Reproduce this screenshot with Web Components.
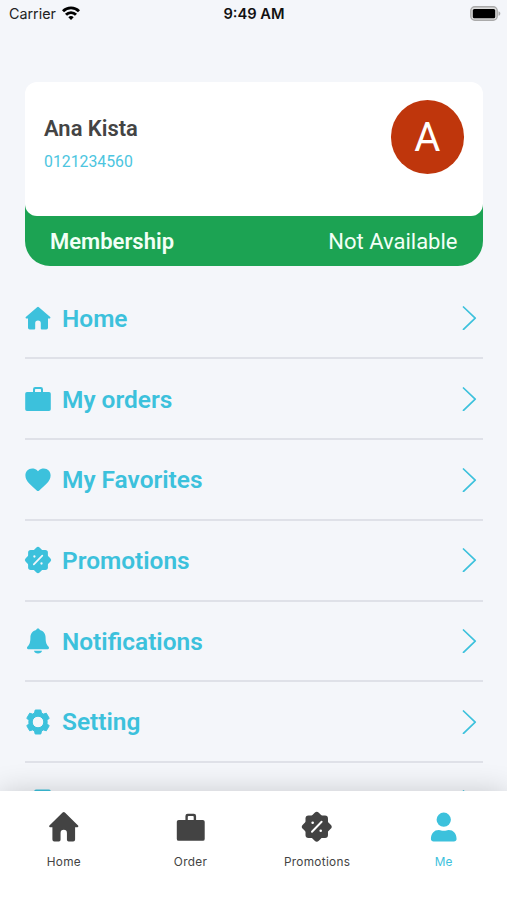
<!DOCTYPE html>
<html lang="en">
<head>
<meta charset="utf-8">
<title>Account</title>
<style>
    html, body {
        margin: 0;
        height: 100%;
        overflow: hidden;
        background: #f4f6fa;
    }
</style>
</head>
<body>
<account-screen></account-screen>

<script>
// Every glyph of the app, drawn in a 26 x 26 box
const ICONS = {
    home: `<path d="M12.1 2.2a1.4 1.4 0 0 1 1.8 0L25.2 12a.8.8 0 0 1-.5 1.4H23v9.4a1.7 1.7 0 0 1-1.7 1.7h-4.5a1 1 0 0 1-1-1v-5.2a2.8 2.8 0 0 0-5.6 0v5.2a1 1 0 0 1-1 1H4.700a1.700 1.700 0 0 1-1.700-1.700v-9.400H1.300a.8.8 0 0 1-.5-1.400z"/>`,
    homeTall: `<path d="M12 .4a1.500 1.500 0 0 1 2 0L25.600 12a.8.8 0 0 1-.5 1.400H23v10.800a1.700 1.700 0 0 1-1.700 1.700h-4a1.500 1.500 0 0 1-1.500-1.500v-6a2.800 2.800 0 0 0-5.600 0v6a1.500 1.500 0 0 1-1.500 1.500h-4A1.700 1.700 0 0 1 3 24.200V13.400H.9A.8.8 0 0 1 .4 12z"/>`,
    bag: `<path fill-rule="evenodd" d="M8 5.900V3.200A2.200 2.200 0 0 1 10.200 1h5.600A2.200 2.200 0 0 1 18 3.200v2.700h6a1.800 1.800 0 0 1 1.800 1.800v15.500A1.800 1.800 0 0 1 24 25H2a1.800 1.800 0 0 1-1.800-1.800V7.700A1.800 1.800 0 0 1 2 5.900zm2 0h6V3.700a.7.7 0 0 0-.7-.7h-4.600a.7.7 0 0 0-.7.7z"/>`,
    bagTall: `<path fill-rule="evenodd" d="M8.300 7V3.500a2 2 0 0 1 2-2h5.400a2 2 0 0 1 2 2V7h5.900a1.700 1.700 0 0 1 1.700 1.700v15a1.700 1.700 0 0 1-1.700 1.700H2.400a1.700 1.700 0 0 1-1.700-1.700v-15A1.700 1.700 0 0 1 2.400 7zm2.100 0h5.200V4.200a.7.7 0 0 0-.7-.7h-3.800a.7.7 0 0 0-.7.7z"/>`,
    heart: `<path d="M13 4.300C11 1.900 8.900 1.500 7.200 1.500 3.200 1.500.4 4.600.4 8.500c0 6.200 6.600 10.400 11.300 15a1.900 1.900 0 0 0 2.600 0c4.700-4.600 11.300-8.800 11.300-15 0-3.900-2.800-7-6.800-7-1.700 0-3.800.4-5.800 2.800z"/>`,
    promo: `<rect x="3.100" y="3.100" width="19.800" height="19.800" rx="2.600"/>
        <rect x="3" y="3" width="20" height="20" rx="2.600" transform="rotate(45 13 13)"/>
        <path d="M8.800 17.400 17.300 8.600" stroke="var(--cut, #f4f6fa)" stroke-width="1.700" stroke-linecap="round"/>
        <circle cx="9.400" cy="9.500" r="1.150" fill="var(--cut, #f4f6fa)"/><circle cx="16.500" cy="16.500" r="1.150" fill="var(--cut, #f4f6fa)"/>`,
    bell: `<path d="M13 .4c1 0 1.700.7 1.900 1.700 3.600.8 5.700 3.900 5.700 7.700 0 5.100 1.100 7 3 9 .8.900.5 2.500-1 2.500H3.400c-1.500 0-1.800-1.600-1-2.500 1.900-2 3-3.900 3-9 0-3.800 2.100-6.900 5.700-7.700C11.300 1.100 12 .4 13 .4zM9 22.700h8c-.3 1.800-1.900 2.800-4 2.800s-3.700-1-4-2.800z"/>`,
    gear: `<path fill-rule="evenodd" d="M10.200 1h5.600l.7 3 1.900 1.100 2.900-.9 2.900 5-2.100 2.100v3.400l2.100 2.100-2.900 5-2.900-.9-1.900 1.100-.7 3h-5.600l-.7-3-1.900-1.100-2.900.9-2.900-5 2.100-2.100v-3.400l-2.100-2.100 2.900-5 2.900.9L9.500 4zM13 7.200a5.800 5.800 0 1 0 0 11.600 5.800 5.800 0 0 0 0-11.600z" stroke="currentColor" stroke-width="1" stroke-linejoin="round"/>`,
    user: `<circle cx="13" cy="6.800" r="6.300"/><path d="M1.700 23.800c0-5 2.800-8 7-8 1.700 0 2.200.8 4.300.8s2.600-.8 4.300-.8c4.200 0 7 3 7 8 0 1.300-1 2.200-2.300 2.200H4c-1.300 0-2.300-.9-2.300-2.200z"/>`,
    help: `<rect x="9" y=".6" width="17" height="24" rx="2.500"/>`
};

class AppIcon extends HTMLElement {
    connectedCallback() {
        this.attachShadow({ mode: 'open' });
        this.shadowRoot.innerHTML = `
            <style>
                :host { display: block; flex: none; width: 26px; height: 26px; }
                svg { display: block; width: 100%; height: 100%; overflow: visible; }
            </style>
            <svg viewBox="0 0 26 26" fill="currentColor">${ICONS[this.getAttribute('name')]}</svg>
        `;
    }
}
customElements.define('app-icon', AppIcon);

class StatusBar extends HTMLElement {
    constructor() {
        super();
        this.attachShadow({ mode: 'open' });
        this.shadowRoot.innerHTML = `
            <style>
                :host {
                    display: grid;
                    grid-template-columns: 1fr auto 1fr;
                    align-items: center;
                    height: 28px;
                    padding: 0 8px 0 9px;
                    font: 14.3px/28px Inter, sans-serif;
                    color: #222;
                }
                .carrier { display: flex; align-items: center; gap: 6px; }
                .time { font-size: 14.7px; font-weight: 600; color: #111; }
                .battery { justify-self: end; margin-right: -2px; margin-top: -1px; }
                svg { display: block; }
                .carrier svg { margin-top: -2px; }
            </style>
            <div class="carrier">
                <span>Carrier</span>
                <svg width="18" height="14" viewBox="0 0 18 14" fill="none" stroke="#000" stroke-width="2.900">
                    <path d="M1 5.200a11.300 11.300 0 0 1 16 0M4 8.700a7 7 0 0 1 10 0"/>
                    <path d="M9 14 6.300 11.300a3.800 3.800 0 0 1 5.400 0z" fill="#000" stroke="none"/>
                </svg>
            </div>
            <span class="time">9:49 AM</span>
            <svg class="battery" width="31" height="15" viewBox="0 0 31 15">
                <rect x=".8" y=".8" width="26.400" height="13.400" rx="4" fill="#ddd" stroke="#aaa" stroke-width="1.400"/>
                <rect x="2.800" y="3" width="22.400" height="9.200" rx="1.500"/>
                <path d="M28.500 5.200c2.400.8 2.400 3.800 0 4.600z" fill="#aaa"/>
            </svg>
        `;
    }
}
customElements.define('status-bar', StatusBar);

class ProfileCard extends HTMLElement {
    constructor() {
        super();
        this.attachShadow({ mode: 'open' });
        this.shadowRoot.innerHTML = `
            <style>
                :host {
                    display: block;
                    background: linear-gradient(transparent 50%, #1ca353 50%);
                    border-radius: 0 0 25px 25px;
                }
                .person {
                    display: flex;
                    justify-content: space-between;
                    box-sizing: border-box;
                    height: 134px;
                    padding: 18px 18.500px 18px 19px;
                    background: #fff;
                    border-radius: 12px;
                }
                .name { margin-top: 15px; font-size: 21.950px; line-height: 28px; font-weight: 600; color: #444; }
                .phone { margin-top: 8px; font-size: 15.800px; line-height: 22px; color: #4cc5e0; }
                .avatar {
                    width: 73.500px;
                    height: 73.500px;
                    border-radius: 50%;
                    background: #bf360c;
                    color: #fff;
                    font-size: 40px;
                    line-height: 76px;
                    text-align: center;
                }
                .membership {
                    display: flex;
                    justify-content: space-between;
                    height: 50px;
                    padding: 0 25px;
                    font-size: 22px;
                    line-height: 51px;
                    color: #f2fff6;
                }
                .label { font-weight: 600; }
            </style>
            <div class="person">
                <div>
                    <div class="name"><slot name="name"></slot></div>
                    <div class="phone"><slot name="phone"></slot></div>
                </div>
                <div class="avatar">A</div>
            </div>
            <div class="membership">
                <span class="label">Membership</span>
                <span class="value"><slot name="membership"></slot></span>
            </div>
        `;
    }
}
customElements.define('profile-card', ProfileCard);

class MenuRow extends HTMLElement {
    connectedCallback() {
        this.attachShadow({ mode: 'open' });
        this.shadowRoot.innerHTML = `
            <style>
                :host {
                    display: flex;
                    align-items: center;
                    flex: none;
                    box-sizing: border-box;
                    height: 80.700px;
                    padding-right: 5.500px;
                    border-bottom: 2px solid #dfe1e8;
                    color: #3cc1dc;
                    font-size: 24.450px;
                    font-weight: 600;
                }
                .text { flex: 1; margin-left: 11px; padding-top: 1.400px; line-height: 30px; }
                svg { display: block; }
            </style>
            <app-icon name="${this.getAttribute('icon')}"></app-icon>
            <span class="text"><slot></slot></span>
            <svg width="15" height="24" viewBox="0 1 15 24" fill="none" stroke="currentColor" stroke-width="1.700" stroke-linecap="round" stroke-linejoin="round">
                <path d="M1.500 2 13.200 13.200 1.500 24.400"/>
            </svg>
        `;
    }
}
customElements.define('menu-row', MenuRow);

class TabItem extends HTMLElement {
    connectedCallback() {
        this.attachShadow({ mode: 'open' });
        this.shadowRoot.innerHTML = `
            <style>
                :host {
                    --cut: #fff;
                    display: flex;
                    flex: 1;
                    flex-direction: column;
                    align-items: center;
                    padding-top: 21.200px;
                    color: #434343;
                    font: 11.800px/16px Inter, sans-serif;
                    letter-spacing: 0.3px;
                }
                :host([active]) { color: #3cc1dc; }
                app-icon { width: 29.500px; height: 29.500px; margin-bottom: 13px; }
            </style>
            <app-icon name="${this.getAttribute('icon')}"></app-icon>
            <slot></slot>
        `;
    }
}
customElements.define('tab-item', TabItem);

class TabBar extends HTMLElement {
    constructor() {
        super();
        this.attachShadow({ mode: 'open' });
        this.shadowRoot.innerHTML = `
            <style>
                :host {
                    display: flex;
                    flex: none;
                    box-sizing: border-box;
                    height: 109.500px;
                    padding-left: 0.600px;
                    background: #fff;
                    box-shadow: 0 2px 28px rgba(0, 0, 0, 0.2);
                    z-index: 1;
                }
            </style>
            <slot></slot>
        `;
    }
}
customElements.define('tab-bar', TabBar);

class AccountScreen extends HTMLElement {
    constructor() {
        super();
        this.attachShadow({ mode: 'open' });
        this.shadowRoot.innerHTML = `
            <style>
                :host {
                    display: flex;
                    flex-direction: column;
                    height: 100vh;
                    overflow: hidden;
                    background: #f4f6fa;
                    font-family: Roboto, sans-serif;
                }
                main {
                    flex: 1;
                    min-height: 0;
                    overflow: hidden;
                    padding: 54px 24.500px 0 25px;
                }
                nav { margin-top: 12.800px; }
            </style>
            <status-bar></status-bar>
            <main>
                <profile-card>
                    <span slot="name">Ana Kista</span>
                    <span slot="phone">0121234560</span>
                    <span slot="membership">Not Available</span>
                </profile-card>
                <nav>
                    <menu-row icon="home">Home</menu-row>
                    <menu-row icon="bag">My orders</menu-row>
                    <menu-row icon="heart">My Favorites</menu-row>
                    <menu-row icon="promo">Promotions</menu-row>
                    <menu-row icon="bell">Notifications</menu-row>
                    <menu-row icon="gear">Setting</menu-row>
                    <menu-row icon="help"></menu-row>
                </nav>
            </main>
            <tab-bar>
                <tab-item icon="homeTall">Home</tab-item>
                <tab-item icon="bagTall">Order</tab-item>
                <tab-item icon="promo">Promotions</tab-item>
                <tab-item icon="user" active>Me</tab-item>
            </tab-bar>
        `;
    }
}
customElements.define('account-screen', AccountScreen);
</script>
</body>
</html>
